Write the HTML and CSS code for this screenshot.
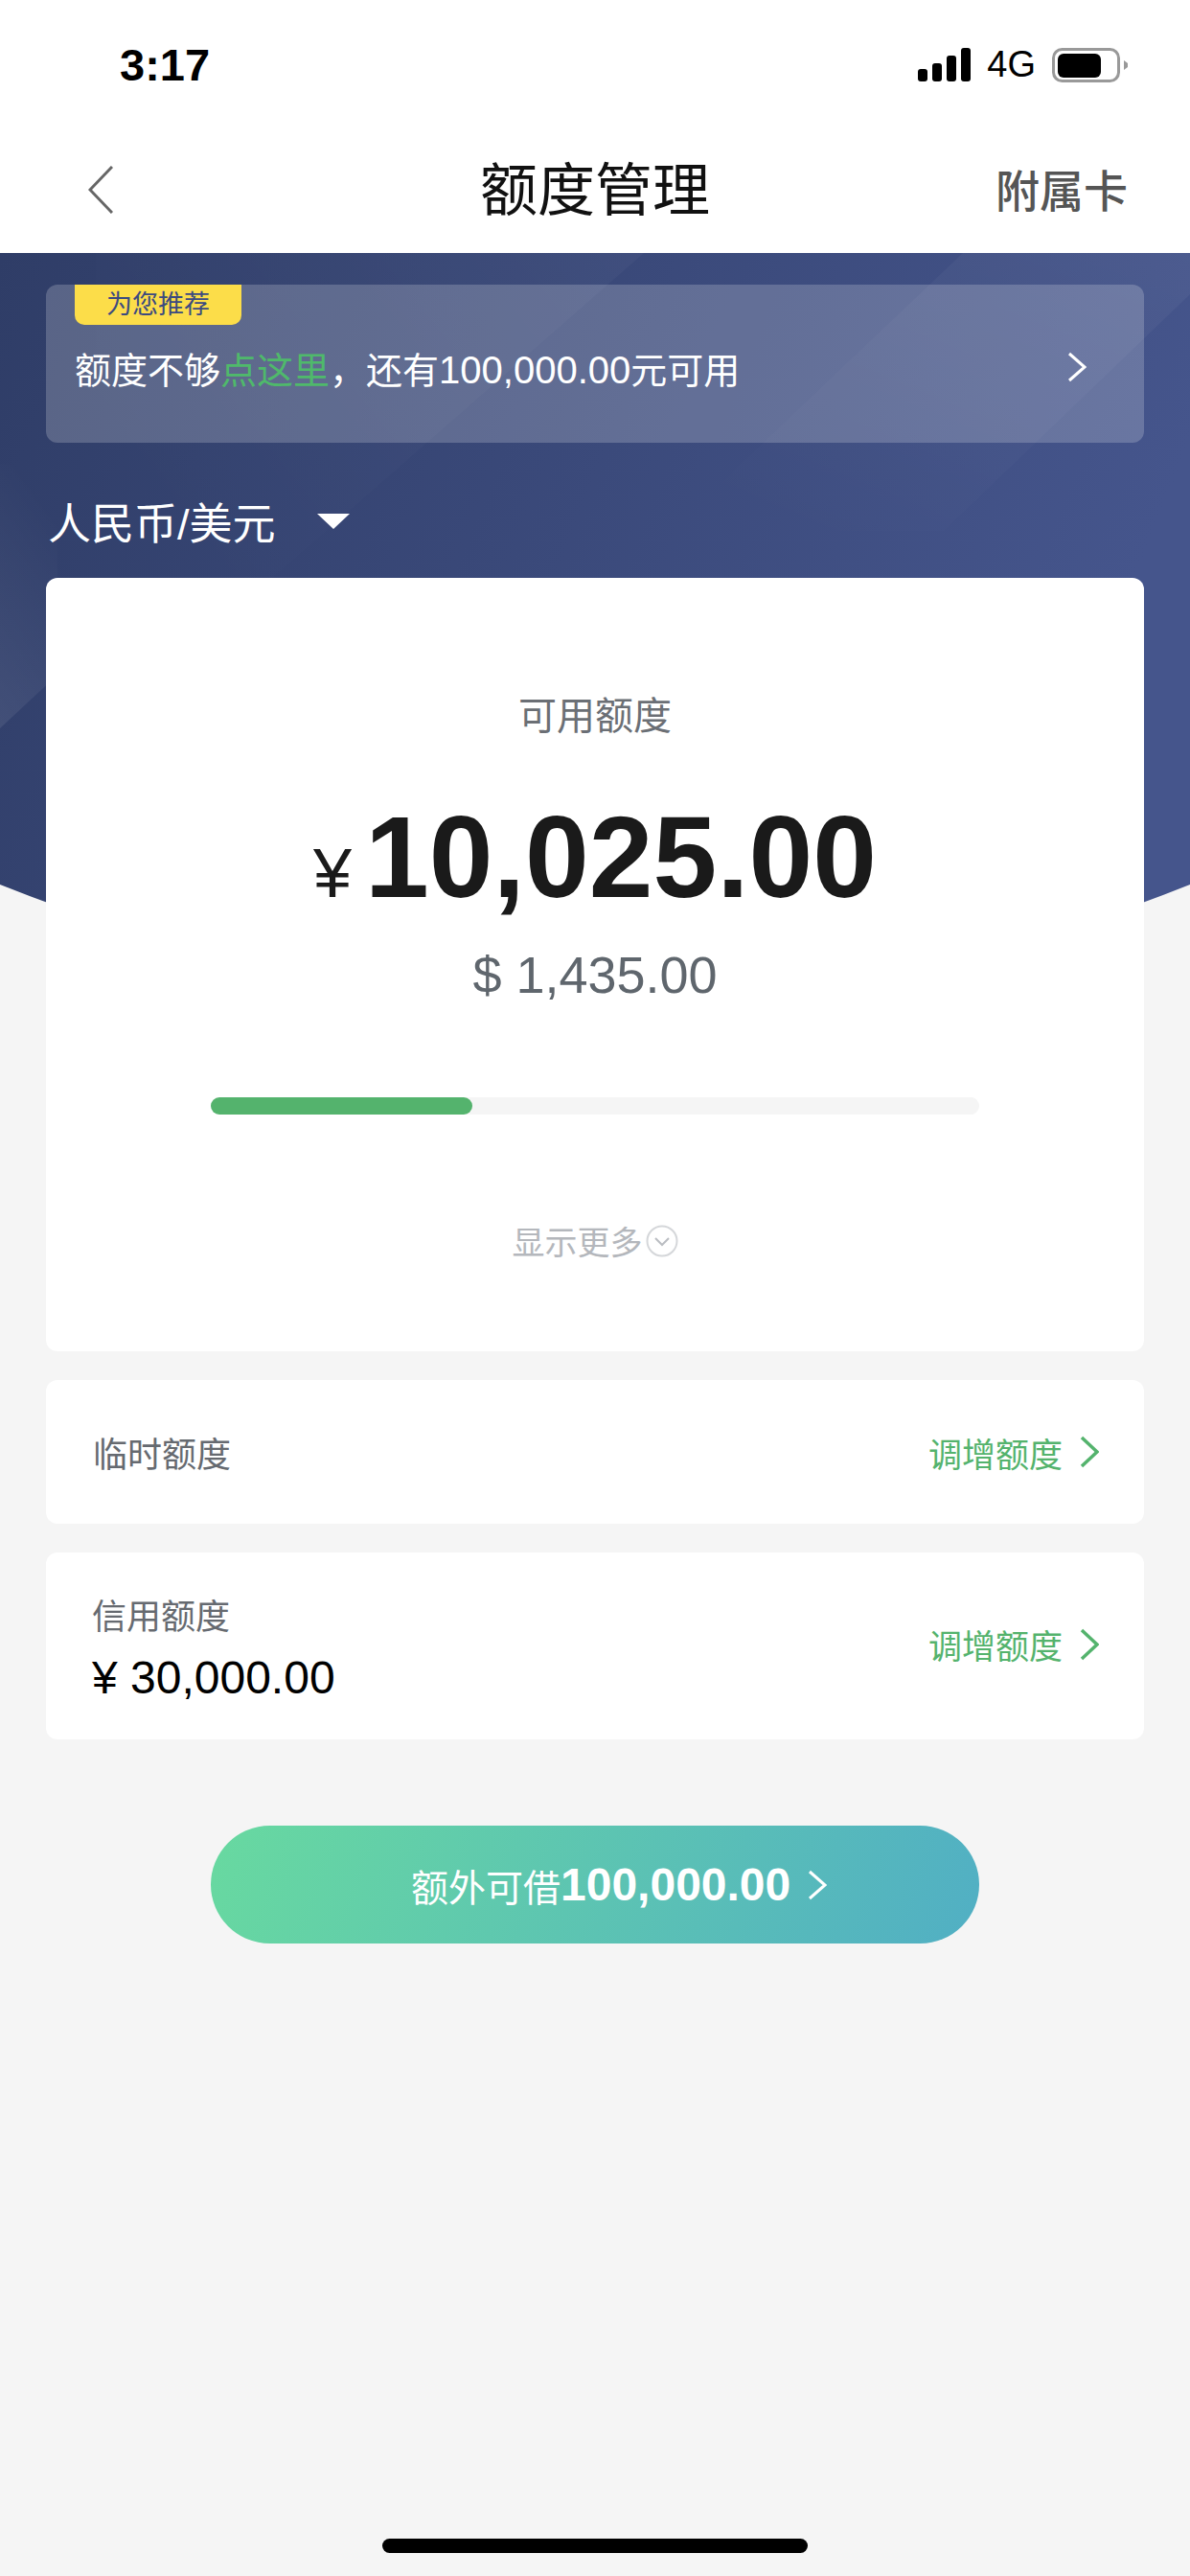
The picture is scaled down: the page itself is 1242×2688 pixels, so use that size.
FILE: index.html
```html
<!DOCTYPE html>
<html lang="zh-CN">
<head>
    <meta charset="UTF-8">
    <meta name="viewport" content="width=device-width, initial-scale=1.0">
    <title>额度管理</title>
    <link rel="stylesheet" href="styles.css">
</head>
<body>
    <svg class="hero-bg" width="1242" height="800" viewBox="0 0 1242 800">
        <defs>
            <linearGradient id="heroBase" x1="0" y1="0" x2="1" y2="0.25">
                <stop offset="0" stop-color="#2f3d67"/>
                <stop offset="1" stop-color="#45558c"/>
            </linearGradient>
            <linearGradient id="bandOne" x1="1" y1="0" x2="0.1" y2="0.6">
                <stop offset="0" stop-color="#fff" stop-opacity="0.03"/>
                <stop offset="1" stop-color="#fff" stop-opacity="0"/>
            </linearGradient>
            <linearGradient id="bandTwo" x1="1" y1="0" x2="0.2" y2="1">
                <stop offset="0" stop-color="#fff" stop-opacity="0.045"/>
                <stop offset="1" stop-color="#fff" stop-opacity="0"/>
            </linearGradient>
            <linearGradient id="bandLeft" x1="0" y1="1" x2="0.3" y2="0">
                <stop offset="0" stop-color="#fff" stop-opacity="0.08"/>
                <stop offset="1" stop-color="#fff" stop-opacity="0"/>
            </linearGradient>
        </defs>
        <path d="M0 0H1242V659Q621 907 0 659Z" fill="url(#heroBase)"/>
        <path d="M100 0H672L100 500Z" fill="url(#bandOne)"/>
        <path d="M1005 0H1242V43L985 290H700Z" fill="url(#bandTwo)"/>
        <path d="M0 220H60V440L0 496Z" fill="url(#bandLeft)"/>
    </svg>

    <header class="top">
        <div class="status">
            <span class="time">3:17</span>
            <div class="status-right">
                <svg width="55" height="35" viewBox="0 0 55 35">
                    <rect x="0" y="22" width="10" height="13" rx="3"/>
                    <rect x="15" y="16" width="10" height="19" rx="3"/>
                    <rect x="30" y="8" width="10" height="27" rx="3"/>
                    <rect x="45" y="0" width="10" height="35" rx="3"/>
                </svg>
                <span class="net">4G</span>
                <svg width="79" height="36" viewBox="0 0 79 36">
                    <rect x="1.5" y="1.5" width="68" height="33" rx="9" fill="none" stroke="#999" stroke-width="3"/>
                    <rect x="6" y="6" width="45" height="25" rx="6"/>
                    <path d="M75 13L79 16V20L75 23Z" fill="#999"/>
                </svg>
            </div>
        </div>
        <nav class="nav">
            <svg class="nav-back" width="26" height="50" viewBox="0 0 26 50">
                <path d="M25 1L2 25L25 49" fill="none" stroke="#666" stroke-width="3"/>
            </svg>
            <h1>额度管理</h1>
            <a class="nav-link">附属卡</a>
        </nav>
    </header>

    <main class="content">
        <section class="promo">
            <span class="promo-tag">为您推荐</span>
            <div class="promo-row">
                <p>额度不够<span class="green">点这里</span>，还有<span class="promo-num">100,000.00</span>元可用</p>
                <svg width="20" height="32" viewBox="0 0 20 32">
                    <path d="M2 2L18 16L2 30" fill="none" stroke="#fff" stroke-width="3"/>
                </svg>
            </div>
        </section>

        <div class="currency">
            <span>人民币/美元</span>
            <svg width="34" height="16" viewBox="0 0 34 16">
                <path d="M0 0H34L17 16Z" fill="#fff"/>
            </svg>
        </div>

        <section class="card">
            <p class="card-label">可用额度</p>
            <p class="card-amount"><span class="yen">¥</span>10,025.00</p>
            <p class="card-usd">$ 1,435.00</p>
            <div class="bar"><div class="bar-fill" style="width: 34%"></div></div>
            <div class="more">
                <span>显示更多</span>
                <svg width="34" height="34" viewBox="0 0 34 34">
                    <circle cx="17" cy="17" r="15.5" fill="none" stroke="#d5d7da" stroke-width="2"/>
                    <path d="M10 14L17 21L24 14" fill="none" stroke="#babdc2" stroke-width="2"/>
                </svg>
            </div>
        </section>

        <section class="row row-temp">
            <span class="row-label">临时额度</span>
            <a class="row-link">调增额度
                <svg width="20" height="34" viewBox="0 0 20 34">
                    <path d="M2 2L18 17L2 32" fill="none" stroke="#54b36d" stroke-width="3.5"/>
                </svg>
            </a>
        </section>

        <section class="row row-credit">
            <div>
                <div class="row-label">信用额度</div>
                <div class="row-value">¥ 30,000.00</div>
            </div>
            <a class="row-link">调增额度
                <svg width="20" height="34" viewBox="0 0 20 34">
                    <path d="M2 2L18 17L2 32" fill="none" stroke="#54b36d" stroke-width="3.5"/>
                </svg>
            </a>
        </section>

        <button class="borrow">
            <span>额外可借</span><b>100,000.00</b>
            <svg width="20" height="32" viewBox="0 0 20 32">
                <path d="M2 2L18 16L2 30" fill="none" stroke="#fff" stroke-width="3"/>
            </svg>
        </button>
    </main>

    <div class="home-bar"></div>
</body>
</html>
```

FILE: styles.css
```css
* {
    box-sizing: border-box;
}
body {
    position: relative;
    display: flex;
    flex-direction: column;
    width: 1242px;
    height: 2688px;
    margin: 0;
    overflow: hidden;
    background-color: #f5f5f5;
    font-family: "Liberation Sans", "Noto Sans CJK SC", sans-serif;
    color: #1a1a1a;
}
p, h1 {
    margin: 0;
    font-weight: normal;
}
svg {
    display: block;
    flex: none;
}
.hero-bg {
    position: absolute;
    top: 264px;
    left: 0;
}

/* top bars */
.top {
    height: 264px;
    background-color: #fff;
}
.status {
    display: flex;
    justify-content: space-between;
    align-items: center;
    height: 135px;
    padding: 0 65px 0 125px;
    color: #000;
}
.time {
    font-size: 47px;
    font-weight: bold;
}
.status-right {
    display: flex;
    align-items: center;
}
.net {
    margin: 0 17px;
    font-size: 38px;
}
.nav {
    display: grid;
    grid-template-columns: 1fr auto 1fr;
    align-items: center;
    height: 122px;
    padding: 0 65px;
}
.nav-back {
    margin: 3px 0 0 27px;
}
.nav h1 {
    margin-bottom: 6px;
    font-size: 60px;
    color: #111;
}
.nav-link {
    justify-self: end;
    font-size: 46px;
    font-weight: 500;
    color: #555;
}

/* content */
.content {
    position: relative;
    display: flex;
    flex-direction: column;
    padding: 0 48px;
}
.promo {
    display: flex;
    flex-direction: column;
    align-items: flex-start;
    height: 165px;
    margin-top: 33px;
    border-radius: 12px;
    background-color: rgba(255, 255, 255, 0.2);
}
.promo-tag {
    height: 42px;
    margin-left: 30px;
    padding: 0 33px;
    border-radius: 0 0 10px 10px;
    background-color: #fcdd49;
    color: #3b4a80;
    font-size: 27px;
    line-height: 42px;
}
.promo-row {
    display: flex;
    justify-content: space-between;
    align-items: center;
    width: 100%;
    height: 92px;
    padding: 0 60px 4px 30px;
    color: #fff;
    font-size: 38px;
}
.promo-num {
    font-size: 40px;
}
.green {
    color: #4fb96b;
}
.currency {
    display: flex;
    align-items: center;
    gap: 43px;
    height: 141px;
    padding: 22px 0 0 2px;
    color: #fff;
    font-size: 45px;
}

/* main card */
.card {
    display: flex;
    flex-direction: column;
    align-items: center;
    height: 807px;
    padding-top: 120px;
    border-radius: 12px;
    background-color: #fff;
}
.card-label {
    font-size: 40px;
    line-height: 48px;
    color: #6b6f75;
}
.card-amount {
    display: flex;
    align-items: baseline;
    margin-top: 58px;
    font-size: 120px;
    font-weight: bold;
    line-height: 130px;
}
.yen {
    margin-right: 14px;
    font-size: 72px;
    font-weight: normal;
}
.card-usd {
    margin-top: 10px;
    font-size: 54px;
    line-height: 62px;
    color: #5f666d;
}
.bar {
    width: 802px;
    height: 18px;
    margin-top: 97px;
    border-radius: 9px;
    background-color: #f5f5f5;
}
.bar-fill {
    height: 100%;
    border-radius: 9px;
    background-color: #54b36d;
}
.more {
    display: flex;
    align-items: center;
    gap: 3px;
    margin-top: 107px;
    font-size: 34px;
    color: #b4b7bc;
}

/* rows */
.row {
    display: flex;
    justify-content: space-between;
    align-items: center;
    margin-top: 30px;
    padding: 0 47px 0 49px;
    border-radius: 12px;
    background-color: #fff;
}
.row-temp {
    height: 150px;
}
.row-credit {
    height: 195px;
    padding-left: 48px;
}
.row-credit .row-link {
    margin-bottom: 4px;
}
.row-label {
    font-size: 36px;
    color: #666a70;
}
.row-value {
    margin-top: 13px;
    font-size: 48px;
    color: #000;
}
.row-link {
    display: flex;
    align-items: center;
    gap: 18px;
    font-size: 35px;
    color: #54b36d;
}
.borrow {
    display: flex;
    align-items: center;
    align-self: center;
    width: 802px;
    height: 123px;
    margin-top: 90px;
    padding: 0 0 0 209px;
    border: none;
    border-radius: 62px;
    background: linear-gradient(110deg, #68d9a0, #51afc4);
    color: #fff;
    font-family: inherit;
    font-size: 39px;
}
.borrow b {
    font-size: 48px;
}
.borrow svg {
    margin-left: 18px;
}
.home-bar {
    width: 444px;
    height: 15px;
    margin: auto auto 24px;
    border-radius: 8px;
    background-color: #000;
}
```
